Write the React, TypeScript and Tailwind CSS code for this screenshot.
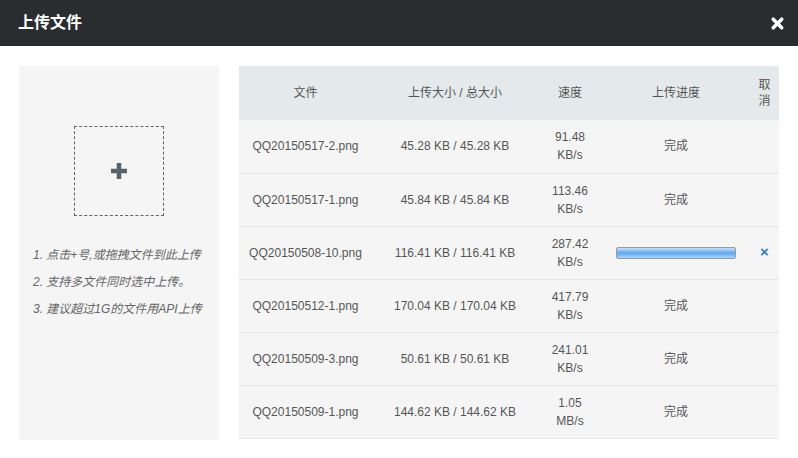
import { X } from "lucide-react";

const rows = [
  { name: "QQ20150517-2.png", size: "45.28 KB / 45.28 KB", speed: "91.48", unit: "KB/s", done: true },
  { name: "QQ20150517-1.png", size: "45.84 KB / 45.84 KB", speed: "113.46", unit: "KB/s", done: true },
  { name: "QQ20150508-10.png", size: "116.41 KB / 116.41 KB", speed: "287.42", unit: "KB/s", done: false },
  { name: "QQ20150512-1.png", size: "170.04 KB / 170.04 KB", speed: "417.79", unit: "KB/s", done: true },
  { name: "QQ20150509-3.png", size: "50.61 KB / 50.61 KB", speed: "241.01", unit: "KB/s", done: true },
  { name: "QQ20150509-1.png", size: "144.62 KB / 144.62 KB", speed: "1.05", unit: "MB/s", done: true },
];

const font = { fontFamily: '"Liberation Sans", "Noto Sans CJK SC", sans-serif' };

export default function App() {
  return (
    <div className="w-[798px] h-[458px] bg-white overflow-hidden" style={font}>
      <div className="h-[46px] bg-[#2a2d2f] flex items-center justify-between pl-[18px] pr-[12px]">
        <h1 className="text-white text-[16px] font-bold">上传文件</h1>
        <X className="text-white w-[17px] h-[17px]" strokeWidth={5} />
      </div>

      <div className="flex gap-[20px] pt-[20px] pl-[19px]">
        <div className="w-[200px] h-[374px] bg-[#f5f5f5] pt-[60px]">
          <div className="mx-auto w-[90px] h-[90px] border border-dashed border-[#5a6670] flex items-center justify-center">
            <svg width="18" height="18" viewBox="0 0 18 18">
              <path d="M9 1v16M1 9h16" stroke="#56636c" strokeWidth="4.5" />
            </svg>
          </div>
          <ul className="mt-[31px] pl-[14px] italic text-[12px] text-[#666] flex flex-col gap-[11px] leading-[16px]">
            <li>1. 点击+号,或拖拽文件到此上传</li>
            <li>2. 支持多文件同时选中上传。</li>
            <li>3. 建议超过1G的文件用API上传</li>
          </ul>
        </div>

        <table className="w-[540px] table-fixed text-[12px] text-[#555] text-center self-start">
          <colgroup>
            <col className="w-[133px]" />
            <col className="w-[166px]" />
            <col className="w-[64px]" />
            <col className="w-[148px]" />
            <col className="w-[29px]" />
          </colgroup>
          <thead>
            <tr className="h-[54px] bg-[#e4e9eb]">
              <th className="font-normal">文件</th>
              <th className="font-normal">上传大小 / 总大小</th>
              <th className="font-normal">速度</th>
              <th className="font-normal">上传进度</th>
              <th className="font-normal leading-[16px] px-[6px]">取消</th>
            </tr>
          </thead>
          <tbody>
            {rows.map((r) => (
              <tr key={r.name} className="h-[53px] bg-[#f5f5f5] border-b border-[#e4e7e9]">
                <td>{r.name}</td>
                <td>{r.size}</td>
                <td className="leading-[18px]">
                  {r.speed}
                  <br />
                  {r.unit}
                </td>
                <td>
                  {r.done ? (
                    "完成"
                  ) : (
                    <div className="mx-auto w-[120px] h-[12px] rounded-[2px] border border-[#9a9a9a] bg-gradient-to-b from-[#c4e2fb] via-[#5aa9ef] to-[#a9d4f9]" />
                  )}
                </td>
                <td>
                  {!r.done && <span className="text-[#2f7fc1] font-bold text-[15px]">×</span>}
                </td>
              </tr>
            ))}
          </tbody>
        </table>
      </div>
    </div>
  );
}
